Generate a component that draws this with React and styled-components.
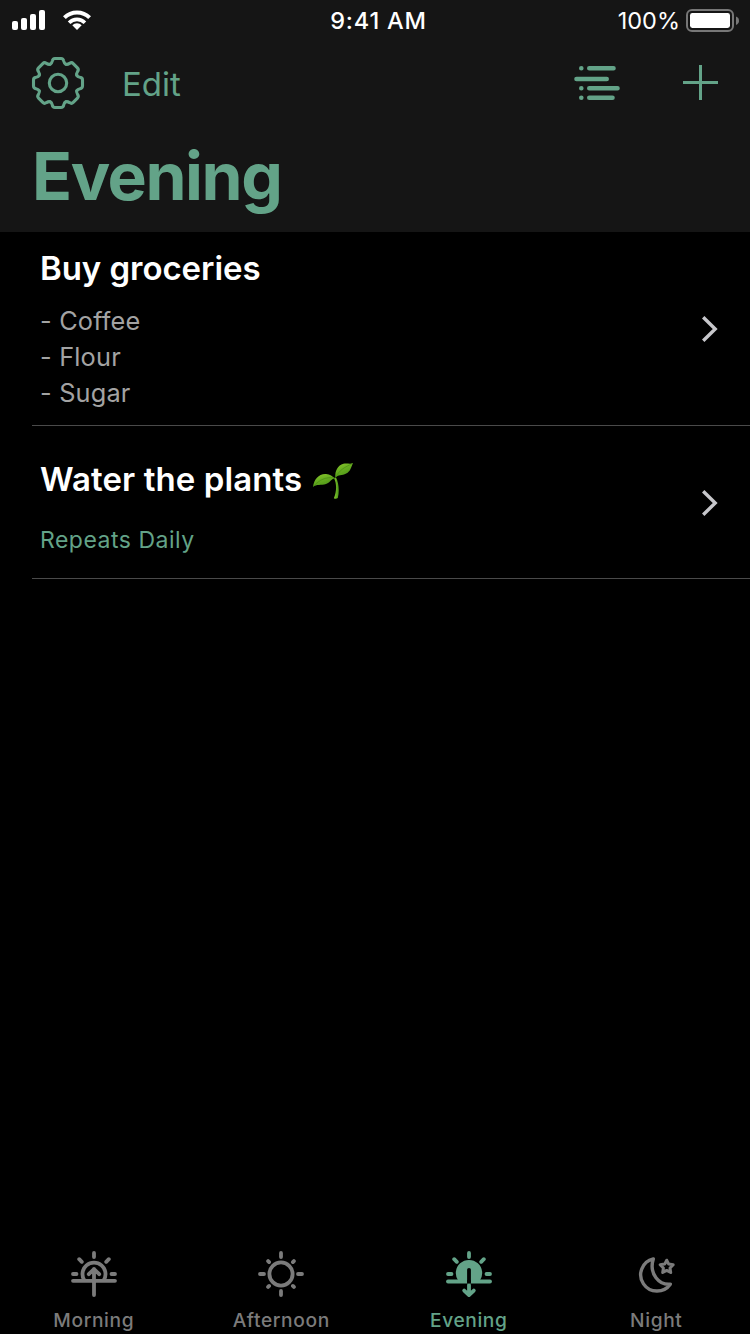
import React from "react";
import styled, { createGlobalStyle } from "styled-components";

const accent = "#63a388";
const muted = "#7b7b7b";

const GlobalStyle = createGlobalStyle`
  html, body { margin: 0; background: #000; }
  body { font-family: Inter, "Liberation Sans", sans-serif; }
  svg { display: block; flex: none; }
`;

const Screen = styled.div`
  width: 750px;
  height: 1334px;
  display: flex;
  flex-direction: column;
  background: #000;
  overflow: hidden;
`;

const Header = styled.header`
  height: 232px;
  flex: none;
  background: #151515;
`;

const StatusBar = styled.div`
  height: 40px;
  display: grid;
  grid-template-columns: 1fr auto 1fr;
  align-items: center;
  padding: 0 11px 0 18px;
  box-sizing: border-box;
  color: #fff;
`;

const StatusGroup = styled.div`
  display: flex;
  align-items: center;
  justify-content: ${(p) => (p.$end ? "flex-end" : "flex-start")};
  gap: ${(p) => (p.$end ? 6 : 18)}px;
  margin-left: ${(p) => (p.$end ? 0 : -6)}px;
`;

const StatusText = styled.span`
  padding-top: 2px;
  font-size: 23.5px;
  line-height: 38px;
  font-weight: ${(p) => p.$weight};
  letter-spacing: ${(p) => p.$spacing}px;
  white-space: nowrap;
`;

const NavBar = styled.nav`
  height: 88px;
  display: flex;
  align-items: center;
  padding: 0 31px;
  color: ${accent};
`;

const NavButton = styled.button`
  all: unset;
  font-size: 33px;
  line-height: 40px;
  letter-spacing: 0;
  margin-left: ${(p) => p.$left || 0};
  padding-bottom: ${(p) => (p.$icon ? 2 : 0)}px;
`;

const Title = styled.h1`
  margin: 0;
  padding-left: 32px;
  font-size: 66px;
  line-height: 96px;
  font-weight: 700;
  letter-spacing: -1.45px;
  color: ${accent};
`;

const List = styled.main`
  flex: 1;
`;

const Row = styled.section`
  margin-left: 32px;
  border-bottom: 1px solid #4a4a4a;
  display: flex;
  align-items: center;
  justify-content: space-between;
`;

const RowBody = styled.div`
  padding: ${(p) => p.$padding};
  display: flex;
  flex-direction: column;
  gap: ${(p) => p.$gap}px;
`;

const RowTitle = styled.h2`
  margin: 0;
  display: flex;
  align-items: center;
  gap: 10px;
  font-size: 33px;
  line-height: 40px;
  font-weight: 600;
  letter-spacing: ${(p) => p.$spacing}px;
  color: #fff;
  white-space: nowrap;
`;

const Notes = styled.div`
  font-size: 25.3px;
  line-height: 36px;
  letter-spacing: 0.2px;
  color: #a3a3a3;
`;

const Repeat = styled.div`
  font-size: 23px;
  line-height: 30px;
  letter-spacing: 0.5px;
  color: ${accent};
`;

const TabBar = styled.footer`
  height: 98px;
  flex: none;
  display: grid;
  grid-template-columns: repeat(4, 1fr);
`;

const Tab = styled.div`
  display: flex;
  flex-direction: column;
  align-items: center;
  padding-top: 14px;
  color: ${(p) => (p.$active ? accent : muted)};
`;

const TabLabel = styled.span`
  margin-top: 10px;
  font-size: 19.2px;
  line-height: 24px;
  font-weight: 500;
  letter-spacing: 0.6px;
`;

const Signal = () => (
  <svg width="33" height="20" fill="currentColor">
    <rect x="0" y="11" width="6" height="9" rx="2" />
    <rect x="9" y="8" width="6" height="12" rx="2" />
    <rect x="18" y="4" width="6" height="16" rx="2" />
    <rect x="27" y="0" width="6" height="20" rx="2" />
  </svg>
);

const Wifi = () => (
  <svg width="28" height="20" fill="none" stroke="currentColor">
    <path d="M1.4 7.7A17.9 17.9 0 0 1 26.6 7.7" strokeWidth="4" />
    <path d="M6.1 12.7A11.2 11.2 0 0 1 21.9 12.7" strokeWidth="3.7" />
    <path d="M14 20L9.3 15.3A6.6 6.6 0 0 1 18.7 15.3Z" fill="currentColor" stroke="none" />
  </svg>
);

const Battery = () => (
  <svg width="53" height="24">
    <rect x="1" y="2" width="46" height="21" rx="5" fill="none" stroke="#777" strokeWidth="2" />
    <rect x="4" y="5" width="40" height="15" rx="2.4" fill="#fff" />
    <path d="M50 8.5Q53 9.6 53 12.7T50 16.9Z" fill="#777" />
  </svg>
);

const Gear = () => (
  <svg width="54" height="54" viewBox="-27 -27 54 54" fill="none" stroke="currentColor" strokeWidth="3.1" strokeLinecap="round">
    <circle r="8.7" />
    {[0, 45, 90, 135, 180, 225, 270, 315].map((angle) => (
      <path
        key={angle}
        transform={`rotate(${angle})`}
        d="M-7.8 -18.8C-6.4 -19.3 -6 -20.6 -5.7 -22C-5.4 -23.8 -4.6 -24.5 -3 -24.5H3C4.6 -24.5 5.4 -23.8 5.7 -22C6 -20.6 6.4 -19.3 7.8 -18.8"
      />
    ))}
  </svg>
);

const Outline = () => (
  <svg width="46" height="36" fill="none" stroke="currentColor" strokeWidth="4.6" strokeLinecap="round">
    <path d="M15.3 3.3H39.5M2.5 14H32.7M15.3 23.3H43.5M15.3 32.7H38.5" />
    <path d="M7.3 3.3h.01M7.3 23.3h.01M7.3 32.7h.01" />
  </svg>
);

const Plus = () => (
  <svg width="36" height="36" fill="currentColor">
    <rect x="16" y="0" width="3" height="35" />
    <rect x="0" y="16" width="35" height="3" />
  </svg>
);

const ChevronSvg = styled.svg`
  margin: 1px 32px 0 0;
`;

const Chevron = () => (
  <ChevronSvg width="16" height="26" fill="none" stroke="#c7c7cb" strokeWidth="3.4">
    <path d="M1.2 1.2L13.2 13L1.2 24.8" />
  </ChevronSvg>
);

const Seedling = () => (
  <svg width="42" height="40" viewBox="0 -1 42 40">
    <defs>
      <linearGradient id="leaf" x1="0" y1="0" x2="0.5" y2="1">
        <stop offset="0" stopColor="#8ecb2e" />
        <stop offset="0.5" stopColor="#67ad20" />
        <stop offset="1" stopColor="#4c9417" />
      </linearGradient>
      <linearGradient id="stem" x1="0" y1="0" x2="1" y2="0">
        <stop offset="0" stopColor="#82c72c" />
        <stop offset="1" stopColor="#4c9519" />
      </linearGradient>
    </defs>
    <path d="M22.2 18.5C24.5 23 25 31 21.9 38.2Q23.8 39.5 25.8 38C27.6 31 26.8 23 24 17.5Z" fill="url(#stem)" />
    <path d="M1 27C2 19 6.5 14.4 13.2 14C18 13.6 20 16.8 23.5 18.2C19 18.5 18.8 22.3 14 24C9 25.7 4.5 23.8 1 27Z" fill="url(#leaf)" />
    <path d="M23.4 18C22.6 10.5 26 5.2 31.4 3.7C35 2.7 38 4.5 41 3C39.2 7 38.5 11.5 34.2 13.6C30 15.8 26 14.6 23.4 18Z" fill="url(#leaf)" />
    <path d="M2 26C7 20 14 16.5 22.5 18M24 17.2C26.5 10.5 33 7 40 3.8" fill="none" stroke="#448614" strokeWidth="0.6" />
  </svg>
);

const iconProps = {
  width: 48,
  height: 48,
  fill: "none",
  stroke: "currentColor",
  strokeWidth: 3.8,
  strokeLinecap: "round",
  strokeLinejoin: "round",
};

const HorizonRays = () => (
  <path d="M24 3V7M9.2 9.2L11.8 11.8M38.8 9.2L36.2 11.8M3 24H6.5M41.5 24H45" />
);

const MorningIcon = () => (
  <svg {...iconProps}>
    <HorizonRays />
    <path d="M14.3 30.3A11.5 11.5 0 1 1 33.7 30.3M3 30.8H45M24 45V19M18.8 24.2L24 19L29.2 24.2" />
  </svg>
);

const AfternoonIcon = () => (
  <svg {...iconProps}>
    <circle cx="24" cy="24" r="11.6" />
    <path d="M24 3V7M24 41V45M3 24H7M41 24H45M11.1 11.1L12.1 12.1M36.9 11.1L35.9 12.1M11.1 36.9L12.1 35.9M36.9 36.9L35.9 35.9" />
  </svg>
);

const EveningIcon = () => (
  <svg {...iconProps}>
    <HorizonRays />
    <path d="M13.4 31A13.2 13.2 0 1 1 34.6 31Z" fill="currentColor" stroke="none" />
    <path d="M3 31.5H45" />
    <path d="M24 19.8V31.5" stroke="#000" />
    <path d="M24 35V44.5M19.2 40.6L24 45L28.8 40.6" />
    <rect x="22.1" y="30" width="3.8" height="3.5" fill="#000" stroke="none" />
  </svg>
);

const NightIcon = () => (
  <svg {...iconProps} strokeWidth="3.4">
    <path d="M21.3 8.9A16.3 16.3 0 1 0 38.3 34.2C27.5 35.4 16.6 24 21.3 8.9Z" />
    <path d="M34.7 10.2L36.7 14.1L41.2 14.8L38 18L38.7 22.5L34.7 20.4L30.7 22.5L31.4 18L28.2 14.8L32.7 14.1Z" strokeWidth="3" />
  </svg>
);

const tabs = [
  { label: "Morning", Icon: MorningIcon },
  { label: "Afternoon", Icon: AfternoonIcon },
  { label: "Evening", Icon: EveningIcon, active: true },
  { label: "Night", Icon: NightIcon },
];

export default function App() {
  return (
    <Screen>
      <GlobalStyle />
      <Header>
        <StatusBar>
          <StatusGroup>
            <Signal />
            <Wifi />
          </StatusGroup>
          <StatusText $weight={500} $spacing={0.8}>9:41 AM</StatusText>
          <StatusGroup $end>
            <StatusText $weight={400} $spacing={0}>100%</StatusText>
            <Battery />
          </StatusGroup>
        </StatusBar>
        <NavBar>
          <NavButton $icon aria-label="Settings"><Gear /></NavButton>
          <NavButton $left="37px">Edit</NavButton>
          <NavButton $icon $left="auto" aria-label="Lists"><Outline /></NavButton>
          <NavButton $icon $left="63px" aria-label="Add"><Plus /></NavButton>
        </NavBar>
        <Title>Evening</Title>
      </Header>
      <List>
        <Row>
          <RowBody $gap={15} $padding="16px 0 14px 8px">
            <RowTitle $spacing={-0.05}>Buy groceries</RowTitle>
            <Notes>
              <div>- Coffee</div>
              <div>- Flour</div>
              <div>- Sugar</div>
            </Notes>
          </RowBody>
          <Chevron />
        </Row>
        <Row>
          <RowBody $gap={26} $padding="33px 0 23px 8px">
            <RowTitle $spacing={0.1}>Water the plants <Seedling /></RowTitle>
            <Repeat>Repeats Daily</Repeat>
          </RowBody>
          <Chevron />
        </Row>
      </List>
      <TabBar>
        {tabs.map(({ label, Icon, active }) => (
          <Tab key={label} $active={active}>
            <Icon />
            <TabLabel>{label}</TabLabel>
          </Tab>
        ))}
      </TabBar>
    </Screen>
  );
}
